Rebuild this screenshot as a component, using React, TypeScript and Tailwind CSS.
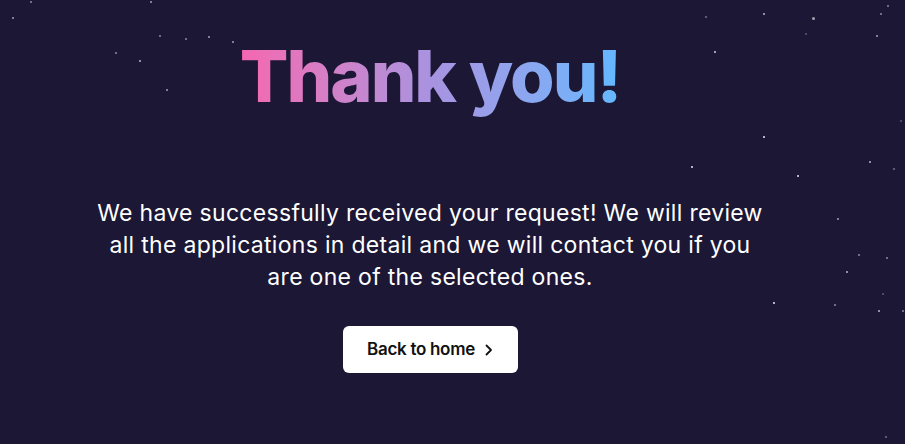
import React from "react";

const stars: [number, number, number, number][] = [
  [12, 17, 1.5, 0.6], [30, 1, 1.5, 0.5], [150, 1, 1.5, 0.6], [115, 52, 1.5, 0.5], [139, 60, 1.5, 0.7],
  [159, 35, 1.5, 0.5], [185, 38, 1.5, 0.5], [208, 36, 1.5, 0.6], [232, 41, 1.5, 0.6], [166, 89, 1.5, 0.6],
  [705, 16, 1.5, 0.4], [763, 13, 1.5, 0.7], [812, 17, 3, 0.6], [880, 13, 2, 0.5], [887, 5, 2, 0.5],
  [876, 35, 1.5, 0.6], [714, 51, 1.5, 0.8], [805, 33, 1.5, 0.3], [763, 136, 1.5, 0.9], [797, 175, 1.5, 0.9],
  [869, 161, 1.5, 0.7], [893, 168, 1.5, 0.4], [837, 218, 2, 0.6], [858, 254, 2, 0.5], [886, 257, 2, 0.5],
  [846, 271, 1.5, 0.7], [773, 302, 1.5, 0.9], [834, 304, 2, 0.5], [878, 310, 1.5, 0.7], [902, 310, 1.5, 0.5],
  [882, 293, 1.5, 0.3], [691, 166, 1.5, 0.9], [885, 436, 1.5, 0.4], [900, 120, 1.5, 0.3],
];

export default function App() {
  return (
    <div
      className="relative w-[905px] h-[444px] overflow-hidden bg-[#1b1735] flex flex-col items-center pr-[45px]"
      style={{ fontFamily: "Inter, 'Noto Sans', sans-serif" }}
    >
      {stars.map(([x, y, s, o], i) => (
        <span
          key={i}
          className="absolute rounded-full bg-white"
          style={{ left: x, top: y, width: s, height: s, opacity: o }}
        />
      ))}
      <h1 className="mt-[31px] text-[72px] leading-[90px] font-extrabold tracking-[-2px] bg-gradient-to-r from-[#f566b0] via-[#a893e0] to-[#62b8ff] bg-clip-text text-transparent">
        Thank you!
      </h1>
      <p className="mt-[76px] w-[672px] text-center text-white text-[23px] leading-[32px] font-normal tracking-[0.3px]">
        We have successfully received your request! We will review all the applications in detail and we will contact you if you are one of the selected ones.
      </p>
      <button className="mt-[33px] w-[175px] h-[47px] rounded-[6px] bg-white flex items-center justify-center gap-[9px] text-[#111] text-[17px] font-semibold tracking-[-0.3px]">
        Back to home
        <svg width="9" height="12" viewBox="0 0 9 12" fill="none">
          <path d="M2.5 1.5L7 6L2.5 10.5" stroke="#111" strokeWidth="1.8" strokeLinecap="round" strokeLinejoin="round" />
        </svg>
      </button>
    </div>
  );
}
